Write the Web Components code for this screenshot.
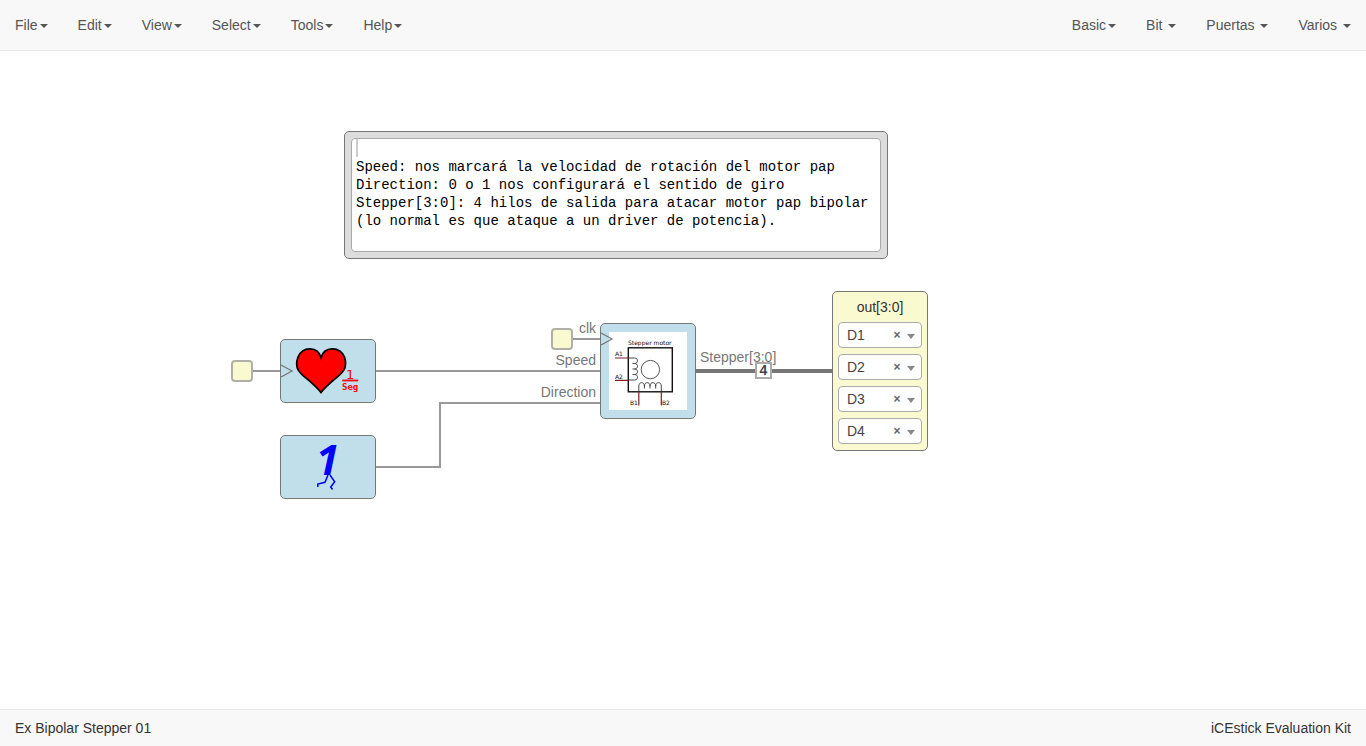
<!DOCTYPE html>
<html lang="en">
<head>
<meta charset="utf-8">
<title>Ex Bipolar Stepper 01</title>
<style>
  html, body { margin: 0; height: 100%; }
  body { font: 14px/20px "Liberation Sans", Arial, sans-serif; color: #333; background: #fff; }
</style>
</head>
<body>
<circuit-app></circuit-app>

<script>
const define = (name, html, setup) => {
  const template = document.createElement('template');
  template.innerHTML = html;
  customElements.define(name, class extends HTMLElement {
    constructor() {
      super();
      this.attachShadow({ mode: 'open' }).append(template.content.cloneNode(true));
    }
    connectedCallback() { if (setup) setup(this, this.shadowRoot); }
  });
};

define('menu-item', `
  <style>
    :host { display: block; }
    a { display: block; padding: 15px; color: #555; text-decoration: none; white-space: nowrap; }
    i { display: inline-block; margin-left: 2px; vertical-align: middle;
        border: 4px solid transparent; border-top-color: currentColor; border-bottom: 0; }
  </style>
  <a href="#"><slot></slot><i></i></a>`);

define('menu-bar', `
  <style>
    :host { display: block; background: #f8f8f8; border-bottom: 1px solid #e7e7e7; }
    nav { display: flex; justify-content: space-between; }
    div { display: flex; }
  </style>
  <nav><div><slot></slot></div><div><slot name="end"></slot></div></nav>`);

define('status-bar', `
  <style>
    :host { display: flex; justify-content: space-between; padding: 8px 15px;
            background: #f8f8f8; border-top: 1px solid #e7e7e7; }
  </style>
  <slot></slot>`);

define('info-note', `
  <style>
    :host { display: block; box-sizing: border-box; padding: 6px; background: #ddd;
            border: 1px solid #777; border-radius: 5px; }
    .field { position: relative; display: flex; border: 1px solid #aaa; border-radius: 4px;
             background: #fff; overflow: hidden; }
    textarea { flex: 1; height: 108px; padding: 1px 4px 3px; border: 0; outline: 0; resize: none;
               overflow: hidden; background: transparent; color: #000;
               font: 14px/18px "Liberation Mono", monospace; }
    .cursor { position: absolute; left: 4px; top: 0; width: 2px; height: 18px; background: #ccc; }
  </style>
  <div class="field"><textarea aria-label="Information" spellcheck="false"></textarea><span class="cursor"></span></div>`,
  (host, root) => { root.querySelector('textarea').value = host.getAttribute('text'); });

define('logic-block', `
  <style>
    :host { display: block; box-sizing: border-box; background: #c0dfeb;
            border: 1px solid #777; border-radius: 5px; }
  </style>
  <slot></slot>`);

define('clock-pad', `
  <style>
    :host { display: block; box-sizing: border-box; width: 22px; height: 22px;
            background: #fafad0; border: 2px solid #b0b0a8; border-radius: 4px; }
  </style>`);

define('bus-size', `
  <style>
    :host { display: block; box-sizing: border-box; width: 17px; height: 17px; background: #fff;
            border: 2px solid #aaa; color: #444; font-weight: bold; line-height: 13px; text-align: center; }
  </style>
  <slot></slot>`);

define('pin-select', `
  <style>
    :host { display: block; position: relative; }
    select { display: block; box-sizing: border-box; width: 100%; height: 26px; margin: 0;
             padding: 0 30px 1px 8px; appearance: none; background: #fff; border: 1px solid #aaa;
             border-radius: 4px; color: #444; font: inherit; }
    button { position: absolute; top: 3px; right: 20px; width: 10px; height: 20px; padding: 0;
             border: 0; background: none; color: #666; font: bold 12px/20px "Liberation Sans", Arial, sans-serif; }
    i { position: absolute; top: 12px; right: 7px; border: 4px solid transparent;
        border-top: 5px solid #888; border-bottom: 0; pointer-events: none; }
  </style>
  <select aria-label="Pin"></select><button type="button" aria-label="Clear pin">×</button><i></i>`,
  (host, root) => {
    root.querySelector('select').replaceChildren(new Option(host.getAttribute('value')));
  });

define('output-block', `
  <style>
    :host { display: flex; flex-direction: column; gap: 6px; box-sizing: border-box; padding: 5px 5px 6px;
            background: #fafad0; border: 1px solid #777; border-radius: 5px; }
    header { height: 19px; text-align: center; }
  </style>
  <header><slot name="title"></slot></header>
  <slot></slot>`);

define('circuit-canvas', `
  <style>
    :host { display: block; position: relative; overflow: hidden; }
    .wires { position: absolute; inset: 0; width: 100%; height: 100%; }
    .wires path { fill: none; stroke: #999; stroke-width: 2; }
    .wires .bus { stroke: #777; stroke-width: 4; }
    .wires text { fill: #777; }
    .end { text-anchor: end; }
    .node { position: absolute; }
    .node svg { display: block; overflow: visible; }
    #note { left: 344px; top: 80px; width: 544px; }
    #pad-a { left: 231px; top: 309px; }
    #pad-b { left: 551px; top: 277px; }
    #heart { left: 280px; top: 288px; width: 96px; height: 64px; }
    #one { left: 280px; top: 384px; width: 96px; height: 64px; }
    #motor { left: 600px; top: 272px; width: 96px; height: 96px; }
    #out { left: 832px; top: 240px; width: 96px; }
    #size { left: 755px; top: 311px; }
  </style>
  <svg class="wires">
    <path d="M252 320H280M376 320H600M572 288H600M376 416H440V352H600"/>
    <path class="bus" d="M696 320H832"/>
    <text class="end" x="596" y="282">clk</text>
    <text class="end" x="596" y="314">Speed</text>
    <text class="end" x="596" y="346">Direction</text>
    <text x="700" y="311">Stepper[3:0]</text>
  </svg>
  <info-note class="node" id="note" text="
Speed: nos marcará la velocidad de rotación del motor pap
Direction: 0 o 1 nos configurará el sentido de giro
Stepper[3:0]: 4 hilos de salida para atacar motor pap bipolar
(lo normal es que ataque a un driver de potencia)."></info-note>
  <clock-pad class="node" id="pad-a"></clock-pad>
  <clock-pad class="node" id="pad-b"></clock-pad>
  <logic-block class="node" id="heart">
    <svg width="94" height="62" viewBox="281 340 94 62">
      <path d="M281 365L292 371L281 377" fill="none" stroke="#777" stroke-width="1.300"/>
      <path d="M321 357.5C318 346.5 303 345.500 298 357C293.500 369.500 301 374 309 380.500C314 385 318 388.500 321 392.500C324 388.500 328 385 333 380.500C341 374 348.500 369.500 344.500 357C339.500 345.500 324 346.500 321 357.500Z" fill="#f00" stroke="#000" stroke-width="1.700"/>
      <path d="M342.300 380.500H358.200" stroke="#f00" stroke-width="1.800"/>
      <g fill="#f00">
        <text x="346" y="379" font-size="13" font-family="DejaVu Sans, sans-serif">1</text>
        <text x="342" y="390" font-size="9" font-weight="bold" font-family="DejaVu Sans Mono, monospace">Seg</text>
      </g>
    </svg>
  </logic-block>
  <logic-block class="node" id="one">
    <svg width="94" height="62" viewBox="281 436 94 62">
      <text x="316" y="475" font-family="Open Sans, sans-serif" font-size="42" font-weight="bold" font-style="italic" fill="#00f">1</text>
      <path d="M328 475L325 482.300L317.800 484V487M330 475L334.700 481.700L330.700 487L332.500 489.500" fill="none" stroke="#00f" stroke-width="1.500"/>
    </svg>
  </logic-block>
  <logic-block class="node" id="motor">
    <svg width="94" height="94" viewBox="601 324 94 94">
      <rect x="609" y="332" width="78" height="78" fill="#fff"/>
      <path d="M601 333L612 339L601 345" fill="none" stroke="#777" stroke-width="1.300"/>
      <rect x="628.300" y="347.800" width="44" height="44" fill="none" stroke="#111" stroke-width="1.400"/>
      <circle cx="650.400" cy="369.600" r="9.200" fill="none" stroke="#444" stroke-width=".9"/>
      <path d="M628 358H634.500C638.500 358 638.500 363.500 634.500 363.500H632.500M634.500 363.500C638.500 363.500 638.500 369 634.500 369H632.500M634.500 369C638.500 369 638.500 374.500 634.500 374.500H632.500M634.500 374.500C638.500 374.500 638.500 380 634.500 380H628M638.800 392V386C638.800 381.500 644.400 381.500 644.400 386V388.500M644.400 386C644.400 381.500 650 381.500 650 386V388.500M650 386C650 381.500 655.700 381.500 655.700 386V388.500M655.700 386C655.700 381.500 661.300 381.500 661.300 386V392" fill="none" stroke="#333" stroke-width=".9"/>
      <path d="M615 358H628M615 380.300H628M638.800 392V405.500M661.300 392V405.500" stroke="#802020" stroke-width="1.200"/>
      <g font-family="DejaVu Sans, sans-serif" font-size="6" fill="#111">
        <text x="628" y="345">Stepper motor</text>
        <text x="615" y="356">A1</text>
        <text x="615" y="379">A2</text>
        <text x="630" y="405">B1</text>
        <text x="662" y="405">B2</text>
      </g>
    </svg>
  </logic-block>
  <bus-size class="node" id="size">4</bus-size>
  <output-block class="node" id="out">
    <span slot="title">out[3:0]</span>
    <pin-select value="D1"></pin-select>
    <pin-select value="D2"></pin-select>
    <pin-select value="D3"></pin-select>
    <pin-select value="D4"></pin-select>
  </output-block>`);

define('circuit-app', `
  <style>
    :host { display: flex; flex-direction: column; min-height: 100%; }
    circuit-canvas { flex: 1; min-height: 460px; }
  </style>
  <menu-bar>
    <menu-item>File</menu-item>
    <menu-item>Edit</menu-item>
    <menu-item>View</menu-item>
    <menu-item>Select</menu-item>
    <menu-item>Tools</menu-item>
    <menu-item>Help</menu-item>
    <menu-item slot="end">Basic</menu-item>
    <menu-item slot="end">Bit </menu-item>
    <menu-item slot="end">Puertas </menu-item>
    <menu-item slot="end">Varios </menu-item>
  </menu-bar>
  <circuit-canvas></circuit-canvas>
  <status-bar><span>Ex Bipolar Stepper 01</span><span>iCEstick Evaluation Kit</span></status-bar>`);
</script>
</body>
</html>
